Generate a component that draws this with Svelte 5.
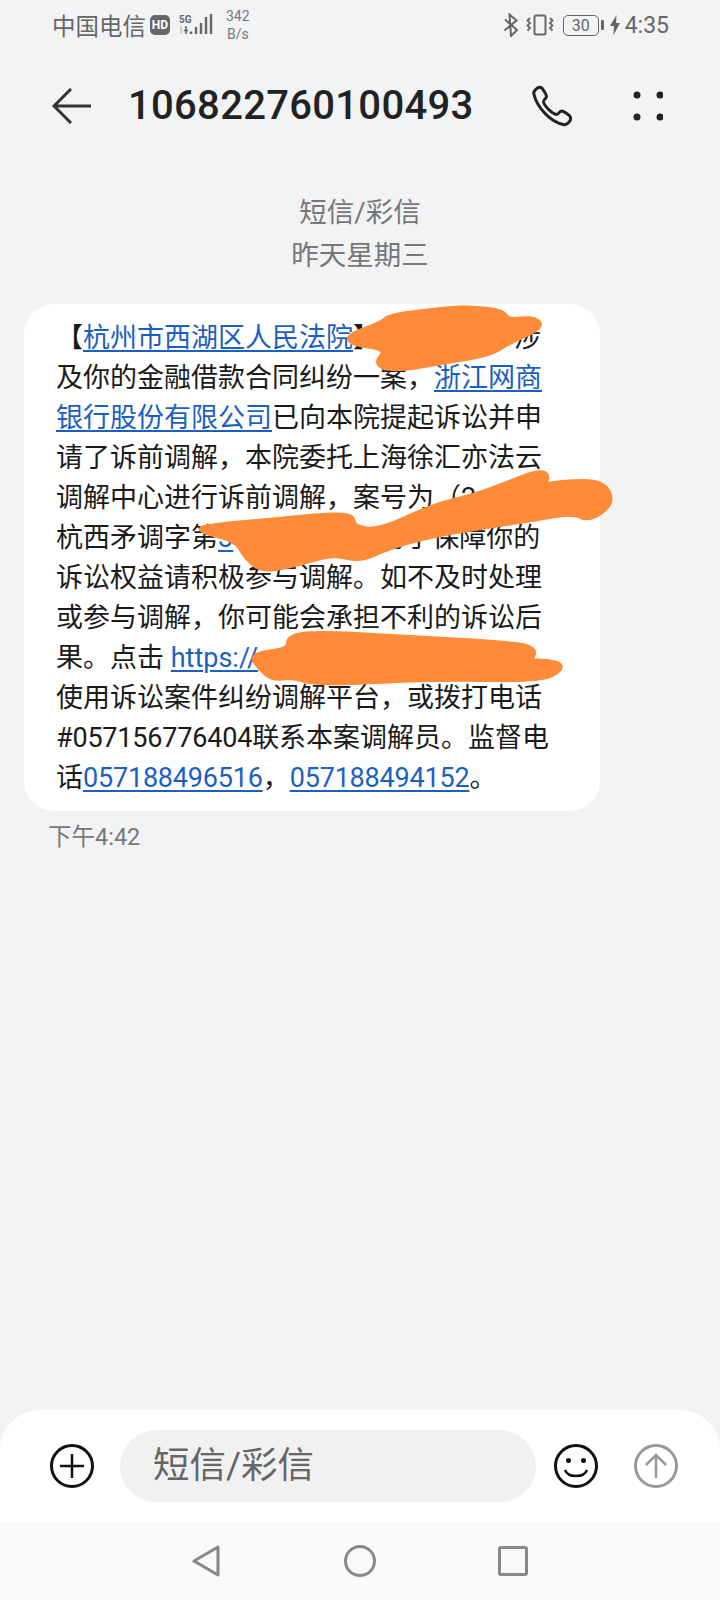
<script>
  const shapes = [
    [[346,337],[383,323],[390,316],[447,309],[474,308],[503,312],[508,321],[534,318],[542,327],[510,341],[490,354],[447,361],[395,370],[376,364],[385,353],[380,347],[356,344]],
    [[202,527],[277,520],[352,513],[353,528],[380,531],[431,507],[474,496],[502,486],[542,470],[549,480],[530,488],[565,482],[603,482],[613,503],[589,520],[573,512],[538,518],[474,528],[427,536],[387,548],[360,560],[336,554],[316,558],[290,566],[261,570],[245,556],[237,540],[202,531]],
    [[251,655],[289,650],[289,637],[316,633],[395,637],[514,644],[534,649],[532,659],[518,661],[558,662],[561,670],[538,680],[435,678],[316,684],[293,676],[273,679],[260,668]]
  ];

  function smooth(pts) {
    const mid = (a, b) => [(a[0] + b[0]) / 2, (a[1] + b[1]) / 2];
    const start = mid(pts[pts.length - 1], pts[0]);
    let d = `M${start[0]} ${start[1]}`;
    pts.forEach((p, i) => {
      const m = mid(p, pts[(i + 1) % pts.length]);
      d += ` Q${p[0]} ${p[1]} ${m[0]} ${m[1]}`;
    });
    return d + " Z";
  }
  const redactions = shapes.map(smooth);
</script>

<div class="page">
  <div class="status">
    <span class="carrier">中国电信</span>
    <span class="hd">HD</span>
    <svg class="signal" width="36" height="24" viewBox="0 0 36 24" aria-hidden="true">
      <text x="1" y="9.500" class="five">5G</text>
      <path d="M3 13v8" stroke="#c4c4c4" stroke-width="1.600"/>
      <path d="M8 13v8M5.800 17.500h4.400" stroke="#666" stroke-width="1.600"/>
      <path d="M14 18.500v2.500M19 14v7M24 10v11M29 4v17M34 1v20" stroke="#666" stroke-width="2.400" transform="translate(-1 0)"/>
    </svg>
    <span class="speed"><span>342</span><span>B/s</span></span>
    <span class="spacer"></span>
    <svg width="16" height="24" viewBox="0 0 16 24" aria-hidden="true">
      <path d="M2 6.500 L14 17 L8 23 L6.500 1.500 L13.500 7.500 L1.500 17.500" fill="none" stroke="#666" stroke-width="2"/>
    </svg>
    <svg class="vib" width="29" height="22" viewBox="0 0 29 22" aria-hidden="true">
      <rect x="8.500" y="1.500" width="11" height="19" rx="1.500" fill="none" stroke="#666" stroke-width="2"/>
      <path d="M4 4 L1.500 6.500 L4 9 L1.500 11.500 L4 14 L1.500 16.500 M24 4 L26.500 6.500 L24 9 L26.500 11.500 L24 14 L26.500 16.500" fill="none" stroke="#666" stroke-width="1.800"/>
    </svg>
    <span class="battery">30</span>
    <span class="nub"></span>
    <svg class="bolt" width="10" height="20" viewBox="0 0 10 20" aria-hidden="true">
      <path d="M6.500 0 L0 11 H4 L3.500 20 L10 8 H6 Z" fill="#666"/>
    </svg>
    <span class="clock">4:35</span>
  </div>

  <header class="top">
    <svg class="back" width="40" height="36" viewBox="0 0 40 36" aria-hidden="true">
      <path d="M39 18 H2 M19 1 L2 18 L19 35" fill="none" stroke="#333" stroke-width="3"/>
    </svg>
    <h1>106822760100493</h1>
    <svg class="phone" width="42" height="42" viewBox="0 0 42 42" aria-hidden="true">
      <path d="M3 9.500 C1.500 6 7 1.500 10 2.500 C11.500 3 15 9 15.500 11 C16 13.500 12 14.500 12.500 17 C13.500 21 21 29 25.500 29.500 C28 29.500 28.500 25.500 31 26 C33 26.500 39 30 39.500 32.500 C40.500 36 35.500 40.500 32.500 39.500 C19 37 6 22 3 9.500 Z" fill="none" stroke="#222" stroke-width="3" stroke-linejoin="round"/>
    </svg>
    <svg class="dots" width="30" height="30" viewBox="0 0 30 30" aria-hidden="true">
      <circle cx="4" cy="4" r="3.500" fill="#222"/><circle cx="27" cy="4" r="3.500" fill="#222"/>
      <circle cx="4" cy="26" r="3.500" fill="#222"/><circle cx="27" cy="26" r="3.500" fill="#222"/>
    </svg>
  </header>

  <main class="thread">
    <div class="meta">
      <div>短信/彩信</div>
      <div>昨天星期三</div>
    </div>
    <div class="bubble">
      【<a href="#a">杭州市西湖区人民法院</a>】<span class="gap g1"></span>涉<br />
      及你的金融借款合同纠纷一案，<a href="#a">浙江网商</a><br />
      <a href="#a">银行股份有限公司</a>已向本院提起诉讼并申<br />
      请了诉前调解，本院委托上海徐汇亦法云<br />
      调解中心进行诉前调解，案号为（2<br />
      杭西矛调字第<a href="#a">3</a><span class="gap g2"></span>为了保障你的<br />
      诉讼权益请积极参与调解。如不及时处理<br />
      或参与调解，你可能会承担不利的诉讼后<br />
      果。点击 <a href="#a">https://</a><br />
      使用诉讼案件纠纷调解平台，或拨打电话<br />
      <span class="num">#057156776404</span>联系本案调解员。监督电<br />
      话<a class="num" href="#a">057188496516</a>，<a class="num" href="#a">057188494152</a>。
    </div>
    <div class="time">下午4:42</div>
  </main>

  <div class="composer">
    <svg width="44" height="44" viewBox="0 0 44 44" aria-hidden="true">
      <circle cx="22" cy="22" r="20.500" fill="none" stroke="#111" stroke-width="3"/>
      <path d="M22 10 V34 M10 22 H34" stroke="#111" stroke-width="2.500"/>
    </svg>
    <div class="input">短信/彩信</div>
    <svg width="44" height="44" viewBox="0 0 44 44" aria-hidden="true">
      <circle cx="22" cy="22" r="20.500" fill="none" stroke="#111" stroke-width="3"/>
      <circle cx="14.500" cy="16.500" r="2.500" fill="#111"/><circle cx="29.500" cy="16.500" r="2.500" fill="#111"/>
      <path d="M11 26 C14 34 30 34 33 26" fill="none" stroke="#111" stroke-width="2.500"/>
    </svg>
    <svg class="send" width="44" height="44" viewBox="0 0 44 44" aria-hidden="true">
      <circle cx="22" cy="22" r="20.500" fill="none" stroke="#999" stroke-width="3"/>
      <path d="M22 34 V11 M12 21 L22 11 L32 21" fill="none" stroke="#999" stroke-width="2.500"/>
    </svg>
  </div>

  <nav class="nav">
    <svg width="28" height="32" viewBox="0 0 28 32" aria-hidden="true">
      <path d="M26 2 V30 L2 16 Z" fill="none" stroke="#888" stroke-width="3" stroke-linejoin="round"/>
    </svg>
    <svg width="32" height="32" viewBox="0 0 32 32" aria-hidden="true">
      <circle cx="16" cy="16" r="14.500" fill="none" stroke="#888" stroke-width="3"/>
    </svg>
    <svg width="30" height="30" viewBox="0 0 30 30" aria-hidden="true">
      <rect x="1.500" y="1.500" width="27" height="27" rx="1.500" fill="none" stroke="#888" stroke-width="3"/>
    </svg>
  </nav>

  <svg class="scribble" width="720" height="1600" viewBox="0 0 720 1600" aria-hidden="true">
    {#each redactions as d}
      <path {d} fill="#fd8b3a" stroke="#fd8b3a" stroke-width="6" stroke-linejoin="round"/>
    {/each}
  </svg>
</div>

<style>
  :global(body) { margin: 0; background: #f1f3f5; }
  .page {
    position: relative;
    width: 720px;
    height: 1600px;
    display: flex;
    flex-direction: column;
    overflow: hidden;
    background: #f1f3f5;
    font-family: Roboto, "Noto Sans CJK SC", sans-serif;
    color: #1a1a1a;
  }
  .status {
    height: 50px;
    flex: none;
    display: flex;
    align-items: center;
    padding: 0 51px 0 52px;
    color: #666;
  }
  .carrier { font-size: 23.500px; width: 98px; }
  .hd {
    width: 20px; height: 20px; border-radius: 5px; background: #666; color: #fff;
    font-size: 12px; font-weight: 700; line-height: 20px; text-align: center;
  }
  .signal { margin-left: 8px; }
  .five { font: 700 10px "Roboto", sans-serif; fill: #666; }
  .speed {
    display: flex; flex-direction: column; align-items: center;
    margin-left: 12px; font-size: 14px; line-height: 18px; color: #777;
  }
  .spacer { flex: 1; }
  .vib { margin-left: 7px; }
  .battery {
    box-sizing: border-box; width: 36px; height: 21px; margin-left: 8px;
    border: 1.500px solid #666; border-radius: 5px;
    font-size: 16px; line-height: 19px; text-align: center;
  }
  .nub { width: 3px; height: 10px; margin-left: 2px; background: #666; border-radius: 1px; }
  .bolt { margin-left: 6px; }
  .clock { font-size: 23px; margin-left: 5px; }

  .top {
    height: 112px;
    flex: none;
    display: flex;
    align-items: center;
    padding: 0 57px 0 52px;
  }
  .top h1 {
    margin: 0 0 0 36px;
    flex: 1;
    font-size: 40px;
    font-weight: 500;
    line-height: 50px;
    color: #222;
    letter-spacing: 0.3px;
  }
  .phone { margin-right: 60px; }

  .thread { flex: 1; padding: 29px 0 0 24px; }
  .meta { text-align: center; width: 672px; font-size: 27.500px; line-height: 43px; color: #777; }
  .bubble {
    box-sizing: border-box;
    width: 576px;
    margin-top: 27px;
    padding: 14px 0 13px 32px;
    background: #fff;
    border-radius: 30px;
    font-size: 27px;
    line-height: 40px;
    white-space: nowrap;
  }
  .bubble a { color: #1c5fc4; text-decoration: underline; text-underline-offset: 3px; text-decoration-thickness: 1.500px; }
  .num { letter-spacing: -0.200px; }
  .gap { display: inline-block; }
  .g1 { width: 134px; }
  .g2 { width: 145px; }
  .time { margin: 11px 0 0 24px; font-size: 23.500px; line-height: 30px; color: #777; }

  .composer {
    flex: none;
    box-sizing: border-box;
    height: 112px;
    display: flex;
    align-items: center;
    padding: 0 0 0 50px;
    background: #fff;
    border-radius: 40px 40px 0 0;
  }
  .input {
    box-sizing: border-box;
    width: 416px; height: 72px;
    margin: 0 18px 0 26px;
    padding-left: 33px;
    border-radius: 36px;
    background: #f1f1f2;
    font-size: 36.500px;
    line-height: 72px;
    color: #666;
  }
  .send { margin-left: 36px; }

  .nav {
    flex: none;
    height: 78px;
    display: flex;
    align-items: center;
    gap: 124px;
    padding: 0 0 0 192px;
    background: #fafafa;
  }
  .nav svg:last-child { margin-left: -2px; }

  .scribble { position: absolute; left: 0; top: 0; pointer-events: none; }
</style>
